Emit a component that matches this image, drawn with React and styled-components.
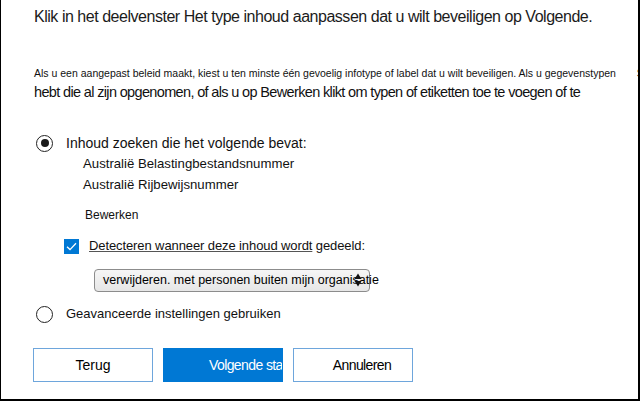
import React from "react";
import styled, { createGlobalStyle } from "styled-components";

const GlobalStyle = createGlobalStyle`
  html, body {
    margin: 0;
    padding: 0;
    background: #ffffff;
  }
  body {
    font-family: "Liberation Sans", Arial, sans-serif;
    color: #111;
  }
`;

const Frame = styled.div`
  box-sizing: border-box;
  width: 640px;
  height: 401px;
  border-left: 1px solid #000;
  border-right: 2px solid #000;
  border-bottom: 2px solid #000;
  overflow: hidden;
  padding-left: 33px;
  display: flex;
  flex-direction: column;
`;

const Heading = styled.div`
  margin-top: 7px;
  font-size: 16px;
  line-height: 20px;
  letter-spacing: -0.47px;
  color: #1b1b1b;
  white-space: nowrap;
`;

const FineRow = styled.div`
  margin-top: 39px;
  display: flex;
  font-size: 10.5px;
  line-height: 14px;
  white-space: nowrap;
`;

const CutGlyph = styled.span`
  margin-left: auto;
  margin-right: -6px;
  font-size: 11px;
`;

const Body = styled.div`
  margin-top: 2px;
  font-size: 14.5px;
  line-height: 20px;
  letter-spacing: -0.65px;
  white-space: nowrap;
`;

const OptionRow = styled.label`
  display: flex;
  align-items: center;
  gap: 13px;
  margin-top: ${({ $top }) => $top}px;
  margin-left: 2px;
  font-size: ${({ $size }) => $size}px;
  line-height: 20px;
`;

const Radio = styled.span`
  box-sizing: border-box;
  width: 17px;
  height: 17px;
  border-radius: 50%;
  border: 1.5px solid #222;
  display: flex;
  align-items: center;
  justify-content: center;
  &::after {
    content: "";
    width: 8px;
    height: 8px;
    border-radius: 50%;
    background: #1a1a1a;
    display: ${({ $checked }) => ($checked ? "block" : "none")};
  }
`;

const TypeList = styled.div`
  margin-left: 49px;
  font-size: 13.2px;
  line-height: 21px;
`;

const EditLink = styled.div`
  margin-top: 10px;
  margin-left: 51px;
  font-size: 12px;
  line-height: 20px;
`;

const CheckRow = styled.label`
  display: flex;
  align-items: center;
  gap: 10px;
  margin-top: 11px;
  margin-left: 30px;
  font-size: 13px;
  letter-spacing: -0.1px;
  line-height: 20px;
`;

const Box = styled.span`
  width: 15px;
  height: 15px;
  background: #0078d4;
  display: flex;
  align-items: center;
  justify-content: center;
`;

const Underlined = styled.span`
  text-decoration: underline;
  text-decoration-color: #555;
  text-underline-offset: 1px;
`;

const Select = styled.div`
  position: relative;
  box-sizing: border-box;
  margin-top: 13px;
  margin-left: 60px;
  width: 276px;
  height: 23px;
  border: 1px solid #8c8c8c;
  border-radius: 4px;
  background: linear-gradient(#f6f6f6, #e6e6e6);
  padding-left: 8px;
  font-size: 12.5px;
  line-height: 21px;
  white-space: nowrap;
  color: #000;
`;

const Arrows = styled.svg`
  position: absolute;
  left: 259px;
  top: 3px;
`;

const ButtonBar = styled.div`
  display: flex;
  gap: 10px;
  margin-top: 24px;
  margin-left: -1px;
`;

const Button = styled.button`
  box-sizing: border-box;
  width: 120px;
  height: 34px;
  border: 1px solid ${({ $primary }) => ($primary ? "#0078d4" : "#6ea6dc")};
  background: ${({ $primary }) => ($primary ? "#0078d4" : "#ffffff")};
  color: ${({ $primary }) => ($primary ? "#ffffff" : "#000000")};
  font-family: "Liberation Sans", Arial, sans-serif;
  font-size: 14px;
  letter-spacing: ${({ $tight }) => ($tight ? "-0.6px" : "0")};
  white-space: nowrap;
  overflow: hidden;
  text-align: ${({ $primary }) => ($primary ? "left" : "center")};
  padding: 0 0 0 ${({ $pad }) => $pad || 0}px;
  border-radius: 0;
`;

export default function App() {
  return (
    <>
      <GlobalStyle />
      <Frame>
        <Heading>
          Klik in het deelvenster Het type inhoud aanpassen dat u wilt beveiligen op Volgende.
        </Heading>
        <FineRow>
          <span>
            Als u een aangepast beleid maakt, kiest u ten minste één gevoelig infotype of label dat u wilt beveiligen. Als u gegevenstypen
          </span>
          <CutGlyph>S</CutGlyph>
        </FineRow>
        <Body>
          hebt die al zijn opgenomen, of als u op Bewerken klikt om typen of etiketten toe te voegen of te
        </Body>
        <OptionRow $top={31} $size={14}>
          <Radio $checked />
          Inhoud zoeken die het volgende bevat:
        </OptionRow>
        <TypeList>
          <div>Australië Belastingbestandsnummer</div>
          <div>Australië Rijbewijsnummer</div>
        </TypeList>
        <EditLink>Bewerken</EditLink>
        <CheckRow>
          <Box>
            <svg width="11" height="9" viewBox="0 0 11 9">
              <path d="M1 4.8 L4 7.6 L10 1.2" fill="none" stroke="#fff" strokeWidth="1.3" />
            </svg>
          </Box>
          <span>
            <Underlined>Detecteren wanneer deze inhoud wordt</Underlined> gedeeld:
          </span>
        </CheckRow>
        <Select>
          verwijderen. met personen buiten mijn organisatie
          <Arrows width="8" height="14" viewBox="0 0 8 14">
            <path d="M4 0.5 L7.5 6 L0.5 6 Z" fill="#111" />
            <path d="M4 13.5 L7.5 8 L0.5 8 Z" fill="#111" />
          </Arrows>
        </Select>
        <OptionRow $top={12} $size={13}>
          <Radio />
          Geavanceerde instellingen gebruiken
        </OptionRow>
        <ButtonBar>
          <Button>Terug</Button>
          <Button $primary $pad={45} $tight>Volgende stap</Button>
          <Button $pad={18} $tight>Annuleren</Button>
        </ButtonBar>
      </Frame>
    </>
  );
}
